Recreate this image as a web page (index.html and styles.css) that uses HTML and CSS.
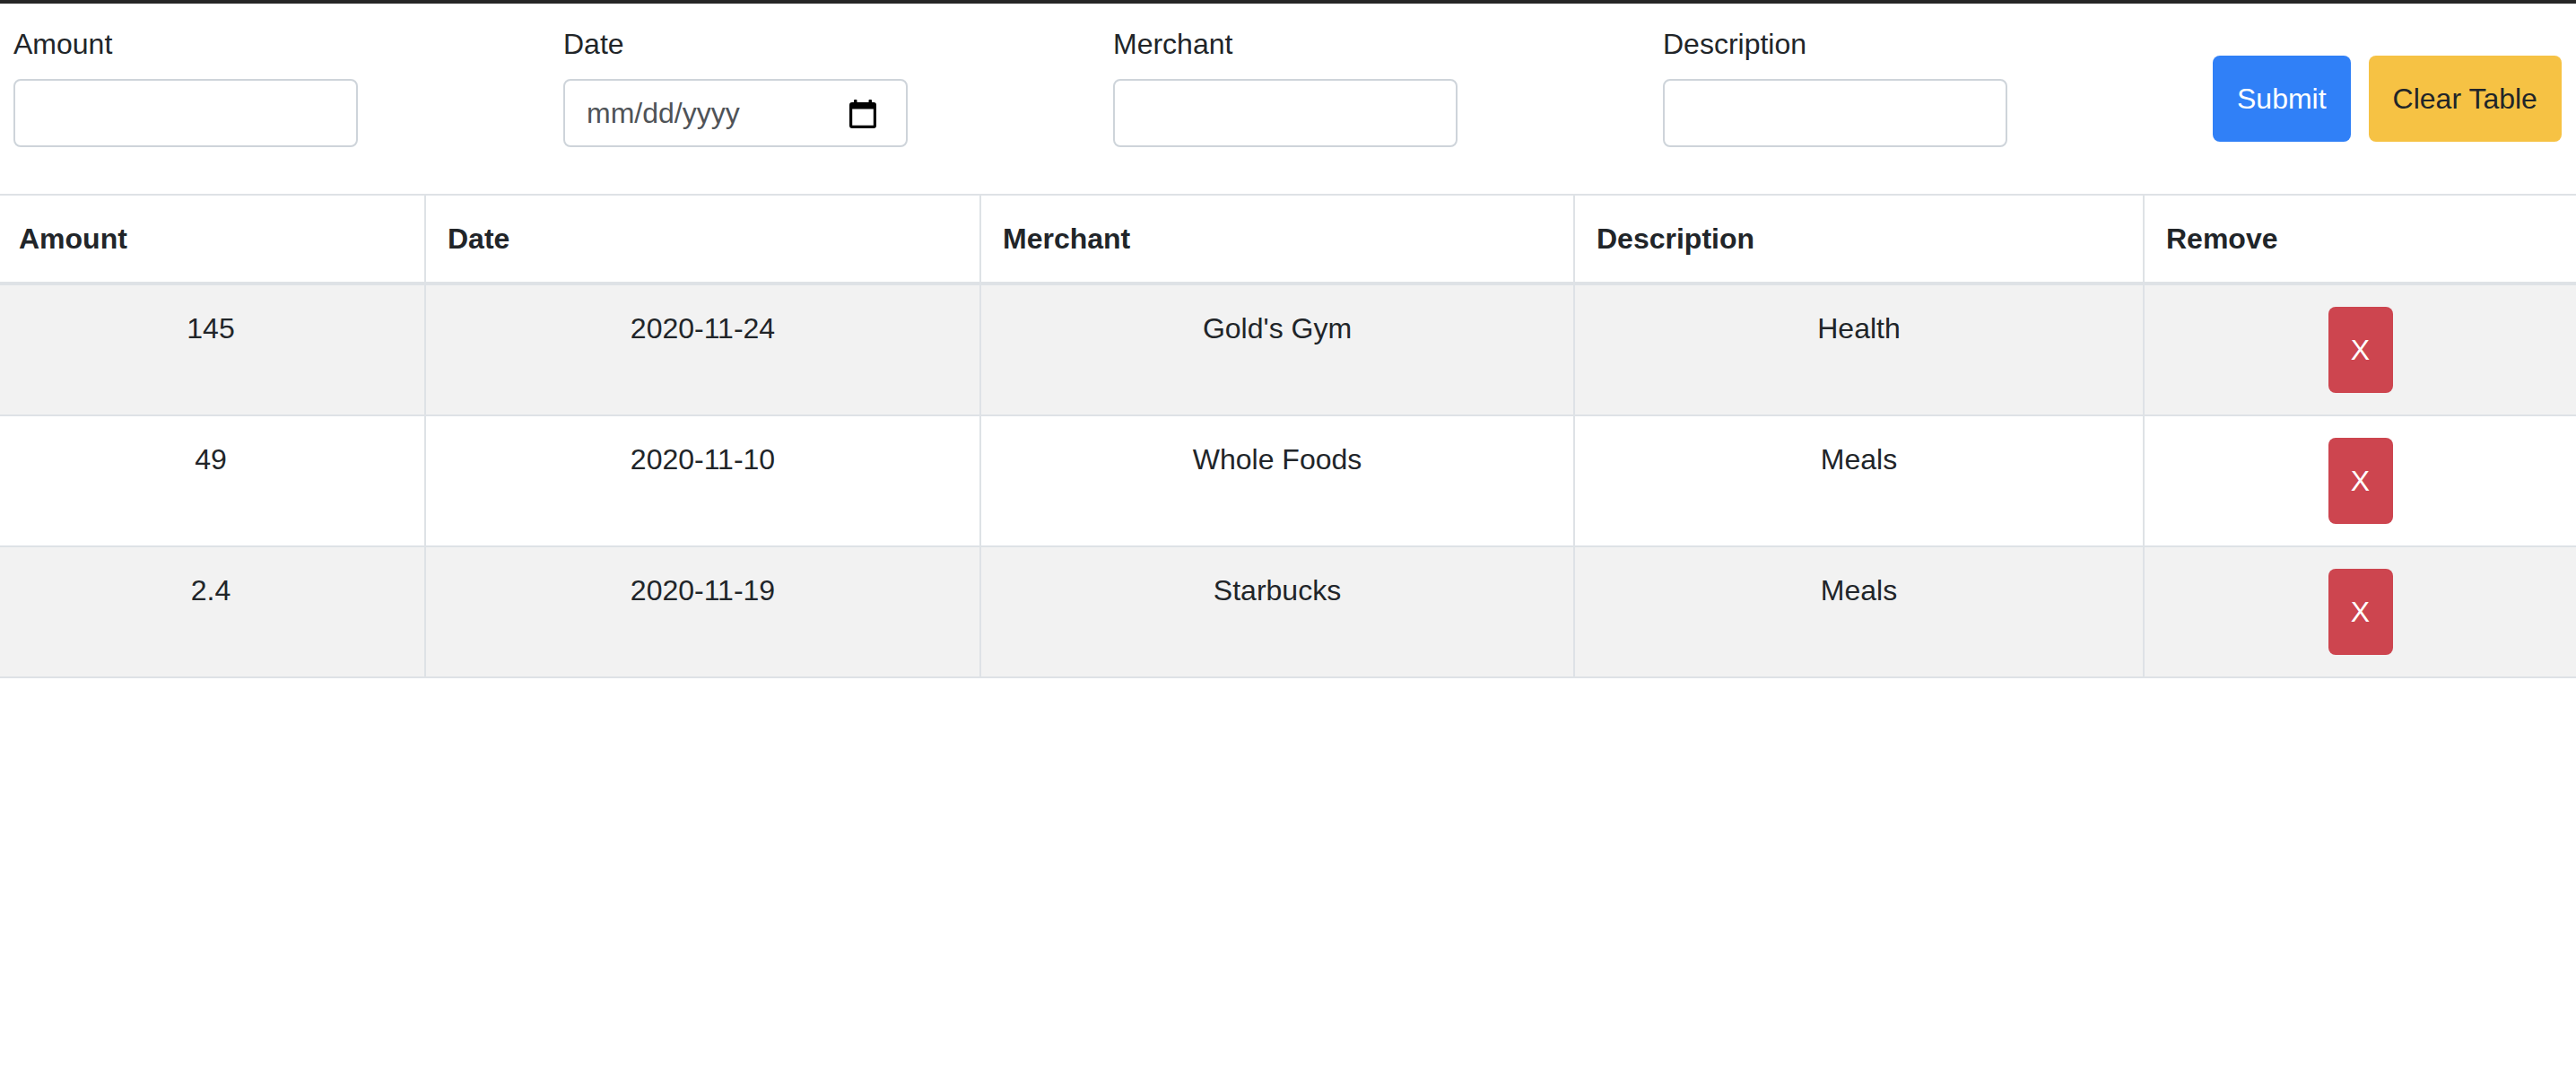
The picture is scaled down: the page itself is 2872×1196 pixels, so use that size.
FILE: index.html
```html
<!DOCTYPE html>
<html lang="en">
<head>
<meta charset="utf-8">
<title>Expense Tracker</title>
<link rel="stylesheet" href="styles.css">
</head>
<body>
<div class="topbar"></div>
<form class="entry">
  <div class="field">
    <label class="label" for="amount">Amount</label>
    <input class="control" id="amount" type="text">
  </div>
  <div class="field">
    <label class="label" for="date">Date</label>
    <div class="control date" id="date">
      <span class="placeholder">mm/dd/yyyy</span>
      <svg class="cal" width="30" height="32" viewBox="0 0 30 32" aria-hidden="true">
        <rect x="5" y="0" width="3.5" height="6" rx="1" fill="#000"/>
        <rect x="21.5" y="0" width="3.5" height="6" rx="1" fill="#000"/>
        <path fill="#000" fill-rule="evenodd" d="M3 3h24a3 3 0 0 1 3 3v23a3 3 0 0 1-3 3H3a3 3 0 0 1-3-3V6a3 3 0 0 1 3-3zM3.2 10.5v18.3h23.6V10.5z"/>
      </svg>
    </div>
  </div>
  <div class="field">
    <label class="label" for="merchant">Merchant</label>
    <input class="control" id="merchant" type="text">
  </div>
  <div class="field">
    <label class="label" for="description">Description</label>
    <input class="control" id="description" type="text">
  </div>
  <div class="actions">
    <button type="button" class="btn btn-primary">Submit</button>
    <button type="button" class="btn btn-warning">Clear Table</button>
  </div>
</form>

<table class="expenses">
  <colgroup>
    <col class="col-amount">
    <col class="col-date">
    <col class="col-merchant">
    <col class="col-desc">
    <col class="col-remove">
  </colgroup>
  <thead>
    <tr>
      <th>Amount</th>
      <th>Date</th>
      <th>Merchant</th>
      <th>Description</th>
      <th>Remove</th>
    </tr>
  </thead>
  <tbody>
    <tr class="striped">
      <td>145</td>
      <td>2020-11-24</td>
      <td>Gold's Gym</td>
      <td>Health</td>
      <td><button type="button" class="btn btn-danger">X</button></td>
    </tr>
    <tr>
      <td>49</td>
      <td>2020-11-10</td>
      <td>Whole Foods</td>
      <td>Meals</td>
      <td><button type="button" class="btn btn-danger">X</button></td>
    </tr>
    <tr class="striped">
      <td>2.4</td>
      <td>2020-11-19</td>
      <td>Starbucks</td>
      <td>Meals</td>
      <td><button type="button" class="btn btn-danger">X</button></td>
    </tr>
  </tbody>
</table>
</body>
</html>
```

FILE: styles.css
```css
html, body {
  margin: 0;
  padding: 0;
  background: #fff;
}

body {
  font-family: "Liberation Sans", Arial, sans-serif;
  font-size: 32px;
  line-height: 48px;
  color: #212529;
}

.topbar {
  height: 4px;
  background: #262626;
}

.entry {
  display: flex;
  align-items: flex-start;
  gap: 229px;
  padding: 21px 0 52px 15px;
}

.field {
  display: flex;
  flex-direction: column;
  flex-shrink: 0;
  width: 384px;
}

.label {
  display: block;
  margin-bottom: 15px;
  line-height: 48px;
}

.control {
  box-sizing: border-box;
  height: 76px;
  width: 384px;
  border: 2px solid #ced4da;
  border-radius: 8px;
  padding: 12px 24px;
  font: inherit;
  color: #495057;
  background: #fff;
  margin: 0;
}

.date {
  display: flex;
  align-items: center;
  justify-content: space-between;
  padding-right: 33px;
}

.placeholder {
  color: #4f5357;
  line-height: 48px;
}

.cal {
  display: block;
  margin-top: 1px;
}

.actions {
  display: flex;
  flex-shrink: 0;
  gap: 20px;
  margin-left: auto;
  margin-right: 18px;
  margin-top: 37px;
}

.btn {
  font: inherit;
  line-height: 48px;
  padding: 24px 27px;
  border: 0;
  border-radius: 8px;
  cursor: pointer;
  margin: 0;
  white-space: nowrap;
  flex-shrink: 0;
}

.btn-primary {
  background: #3080f7;
  color: #fff;
}

.btn-warning {
  background: #f6c244;
  color: #212529;
}

.btn-danger {
  background: #cd454f;
  color: #fff;
  display: inline-block;
  vertical-align: top;
  width: 72px;
  padding: 24px 0;
  text-align: center;
}

.expenses {
  width: 100%;
  table-layout: fixed;
  border-collapse: collapse;
}

.col-amount { width: 474px; }
.col-date { width: 619px; }
.col-merchant { width: 662px; }
.col-desc { width: 635px; }
.col-remove { width: 482px; }

.expenses th,
.expenses td {
  border: 2px solid #dee2e6;
  padding: 24px;
  line-height: 48px;
  vertical-align: top;
}

.expenses th:first-child,
.expenses td:first-child {
  border-left: 0;
  padding-left: 21px;
}

.expenses th:last-child,
.expenses td:last-child {
  border-right: 0;
}

.expenses th {
  text-align: left;
  font-weight: 700;
  border-bottom-width: 4px;
}

.expenses td {
  text-align: center;
}

.striped td {
  background: #f2f2f2;
}
```
